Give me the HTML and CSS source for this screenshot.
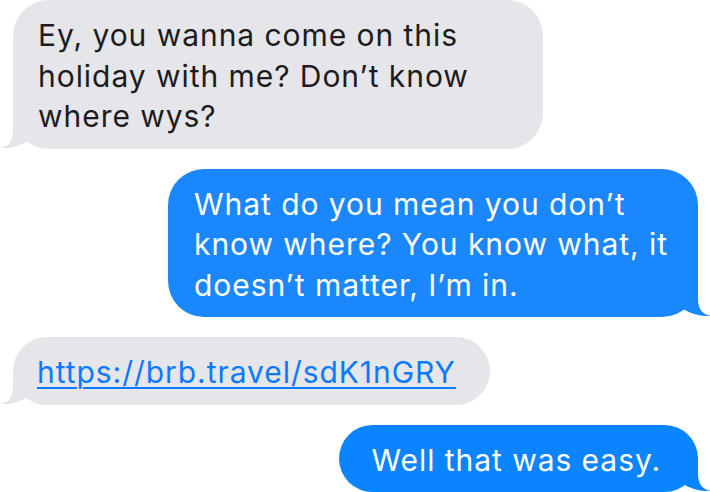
FILE: index.html
```html
<!DOCTYPE html>
<html lang="en">
<head>
<meta charset="utf-8">
<title>Messages</title>
<link rel="stylesheet" href="styles.css">
</head>
<body>
<main class="thread">
  <div class="msg in wide">
    <p class="text">Ey, you wanna come on this<br>holiday with me? Don’t know<br>where wys?</p>
    <svg class="tail" width="28" height="36" viewBox="0 0 28 36" aria-hidden="true"><path d="M13 0 L13 18 Q13 33 0 35 Q15 36 28 28 L28 0 Z"/></svg>
  </div>
  <div class="msg out wide">
    <p class="text">What do you mean you don’t<br>know where? You know what, it<br>doesn’t matter, I’m in.</p>
    <svg class="tail" width="28" height="36" viewBox="0 0 28 36" aria-hidden="true"><path d="M15 0 L15 18 Q15 33 28 35 Q13 36 0 28 L0 0 Z"/></svg>
  </div>
  <div class="msg in link">
    <p class="text"><a href="#">https://brb.travel/sdK1nGRY</a></p>
    <svg class="tail" width="28" height="36" viewBox="0 0 28 36" aria-hidden="true"><path d="M13 0 L13 18 Q13 33 0 35 Q15 36 28 28 L28 0 Z"/></svg>
  </div>
  <div class="msg out last">
    <p class="text">Well that was easy.</p>
    <svg class="tail" width="28" height="36" viewBox="0 0 28 36" aria-hidden="true"><path d="M15 0 L15 18 Q15 33 28 35 Q13 36 0 28 L0 0 Z"/></svg>
  </div>
</main>
</body>
</html>
```

FILE: styles.css
```css
html, body {
  margin: 0;
  padding: 0;
  background: #ffffff;
}

.thread {
  display: flex;
  flex-direction: column;
  gap: 20px;
  font-family: Inter, "Liberation Sans", sans-serif;
  font-size: 30px;
  letter-spacing: 0.95px;
  line-height: 40.5px;
  overflow: hidden;
  height: 492px;
}

.msg {
  position: relative;
  box-sizing: border-box;
  border-radius: 36px;
  padding: 15px 34px 12px 25px;
}

.msg .text {
  margin: 0;
  white-space: nowrap;
  position: relative;
  z-index: 1;
}

.in {
  align-self: flex-start;
  margin-left: 13px;
  background: #e5e5ea;
  color: #1c1c1e;
}

.out {
  align-self: flex-end;
  margin-right: 12px;
  background: #1b87fc;
  color: #ffffff;
  padding-left: 26px;
}

.wide {
  width: 530px;
}

.last {
  background: #0b84ff;
  padding-left: 32px;
  padding-right: 37px;
}

.link {
  padding-left: 24px;
}

.link a {
  color: #0a7aff;
  text-decoration: underline;
  text-decoration-thickness: 2px;
  text-underline-offset: 4px;
}

.tail {
  position: absolute;
  bottom: 0;
  z-index: 0;
}

.in .tail {
  left: -13px;
  fill: #e5e5ea;
}

.out .tail {
  right: -13px;
  fill: #1b87fc;
}

.last .tail {
  fill: #0b84ff;
}
```
